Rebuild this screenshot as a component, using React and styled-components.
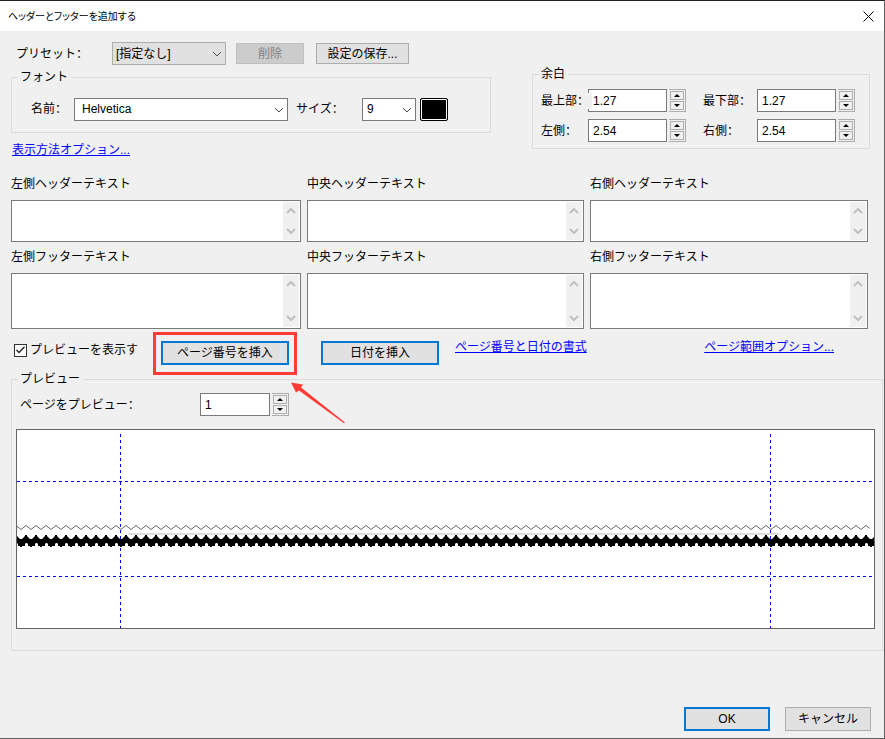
import React, { useState } from 'react'
import styled, { createGlobalStyle, css } from 'styled-components'

const GlobalStyle = createGlobalStyle`
  * {
    box-sizing: border-box;
  }
  body {
    margin: 0;
    background: #f0f0f0;
  }
  body, button, input, select, textarea {
    font-family: 'Liberation Sans', 'Noto Sans CJK SC', sans-serif;
    font-size: 12px;
    line-height: 16px;
    color: #000;
  }
`

const Chevron = ({ up, ...rest }) => (
  <svg width="10" height="6" viewBox="0 0 10 6" fill="none" stroke="currentColor" aria-hidden="true" {...rest}>
    <path d={up ? 'M1 5 L5 1 L9 5' : 'M1 1 L5 5 L9 1'} />
  </svg>
)

const Select = ({ children, wide, grey, grow, ...rest }) => (
  <SelectWrap $grow={grow} $wide={wide}>
    <SelectBox $grey={grey} {...rest}>{children}</SelectBox>
    <SelectArrow />
  </SelectWrap>
)

const Spinner = ({ id, initial, step = 0.01, digits = 2, narrow }) => {
  const [value, setValue] = useState(initial)
  const move = (d) => setValue((Number(value) + d).toFixed(digits))

  return (
    <SpinnerWrap>
      <NumberInput id={id} $narrow={narrow} value={value} onChange={(e) => setValue(e.target.value)} />
      <SpinButtons>
        <SpinButton type="button" aria-label="+" onClick={() => move(step)}>
          <svg width="6" height="3" viewBox="0 0 6 3"><path d="M0 3 L3 0 L6 3 Z" /></svg>
        </SpinButton>
        <SpinButton type="button" aria-label="-" onClick={() => move(-step)}>
          <svg width="6" height="3" viewBox="0 0 6 3"><path d="M0 0 L3 3 L6 0 Z" /></svg>
        </SpinButton>
      </SpinButtons>
    </SpinnerWrap>
  )
}

const TextField = ({ id, label, tall }) => (
  <Field>
    <label htmlFor={id}>{label}</label>
    <AreaFrame $tall={tall}>
      <Area id={id} />
      <ScrollTrack>
        <Chevron up strokeWidth="2" />
        <Chevron strokeWidth="2" />
      </ScrollTrack>
    </AreaFrame>
  </Field>
)

const PagePreview = () => (
  <Canvas>
    <svg width="100%" height="198" aria-hidden="true">
      <defs>
        <pattern id="thin" x="4" y="94" width="10" height="7" patternUnits="userSpaceOnUse">
          <path d="M0 5.5 L5 1.5 L10 5.5" fill="none" stroke="#666" />
        </pattern>
        <pattern id="thick" x="4" y="104" width="10" height="14" patternUnits="userSpaceOnUse">
          <path d="M0 5 H1 L4 2 V1 H6 V2 L9 5 H10 V13 H9 V12 H7 V10 L6 9 H5 L4 10 V12 H1 V13 H0 Z" />
        </pattern>
      </defs>
      <g stroke="#0000ff" strokeDasharray="3 3" shapeRendering="crispEdges">
        <line x1="0" x2="100%" y1="51.5" y2="51.5" />
        <line x1="0" x2="100%" y1="146.5" y2="146.5" />
        <line x1="12.07%" x2="12.07%" y1="4" y2="198" />
        <line x1="87.93%" x2="87.93%" y1="4" y2="198" />
      </g>
      <rect x="13%" y="103" width="76%" height="2" fill="#dcdcdc" />
      <rect y="94" width="99.5%" height="7" fill="url(#thin)" />
      <rect y="104" width="100%" height="14" fill="url(#thick)" />
    </svg>
  </Canvas>
)

const App = () => {
  const [showPreview, setShowPreview] = useState(true)

  return (
    <Dialog>
      <GlobalStyle />
      <TitleBar>
        <Title>ヘッダーとフッターを追加する</Title>
        <CloseButton type="button" aria-label="閉じる">
          <svg width="11" height="11" viewBox="0 0 11 11" stroke="#000" fill="none">
            <path d="M0.500 0.500 L10.500 10.500 M10.500 0.500 L0.500 10.500" />
          </svg>
        </CloseButton>
      </TitleBar>

      <Content>
        <TopArea>
          <div>
            <PresetRow>
              <PresetLabel htmlFor="preset">プリセット：</PresetLabel>
              <Select id="preset" wide={114} grey>
                <option>[指定なし]</option>
              </Select>
              <Button type="button" $width={68} disabled>削除</Button>
              <Button type="button" $width={93}>設定の保存...</Button>
            </PresetRow>
            <Group>
              <legend>フォント</legend>
              <FontRow>
                <label htmlFor="font">名前：</label>
                <Select id="font" grow>
                  <option>Helvetica</option>
                </Select>
                <SizeLabel htmlFor="size">サイズ：</SizeLabel>
                <Select id="size" wide={54}>
                  <option>9</option>
                </Select>
                <Swatch type="button" aria-label="色" />
              </FontRow>
            </Group>
            <DisplayLink href="#">表示方法オプション...</DisplayLink>
          </div>

          <MarginGroup>
            <legend>余白</legend>
            <MarginGrid>
              <MarginLabel htmlFor="top" $over>最上部：</MarginLabel>
              <Spinner id="top" initial="1.27" />
              <MarginLabel htmlFor="bottom">最下部：</MarginLabel>
              <Spinner id="bottom" initial="1.27" />
              <MarginLabel htmlFor="left">左側：</MarginLabel>
              <Spinner id="left" initial="2.54" />
              <MarginLabel htmlFor="right">右側：</MarginLabel>
              <Spinner id="right" initial="2.54" />
            </MarginGrid>
          </MarginGroup>
        </TopArea>

        <TextGrid>
          <TextField id="hl" label="左側ヘッダーテキスト" />
          <TextField id="hc" label="中央ヘッダーテキスト" />
          <TextField id="hr" label="右側ヘッダーテキスト" />
          <TextField id="fl" label="左側フッターテキスト" tall />
          <TextField id="fc" label="中央フッターテキスト" tall />
          <TextField id="fr" label="右側フッターテキスト" tall />
        </TextGrid>

        <Actions>
          <CheckLabel>
            <CheckBox type="checkbox" checked={showPreview} onChange={(e) => setShowPreview(e.target.checked)} />
            {showPreview && (
              <Tick width="9" height="8" viewBox="0 0 9 8" fill="none" stroke="#222" strokeWidth="1.3">
                <path d="M0.500 4 L3 6.500 L8.500 0.800" />
              </Tick>
            )}
            プレビューを表示す
          </CheckLabel>
          <Highlight>
            <Button type="button" $width={128} $primary>ページ番号を挿入</Button>
            <Arrow width="54" height="42" viewBox="0 0 54 42" fill="#ff3b36">
              <path d="M0 0.500 L12 2.500 L10 5.500 L54 40.500 L53 41.300 L8 8.500 L5 10.500 Z" />
            </Arrow>
          </Highlight>
          <Button type="button" $width={118} $primary>日付を挿入</Button>
          <FormatLink href="#">ページ番号と日付の書式</FormatLink>
          <Link href="#">ページ範囲オプション...</Link>
        </Actions>
      </Content>

      <PreviewGroup>
        <legend>プレビュー</legend>
        <PreviewRow>
          <label htmlFor="page">ページをプレビュー：</label>
          <Spinner id="page" initial="1" step={1} digits={0} narrow />
        </PreviewRow>
        <PagePreview />
      </PreviewGroup>

      <Footer>
        <Button type="button" $width={86} $primary>OK</Button>
        <Button type="button" $width={86} $tall>キャンセル</Button>
      </Footer>
    </Dialog>
  )
}

const Dialog = styled.div`
  display: flex;
  flex-direction: column;
  min-height: 100vh;
  background: #f0f0f0;
  border: solid #5f5f5f;
  border-width: 1px 1px 1px 0;
  border-top-color: #221f28;
`

const TitleBar = styled.header`
  display: flex;
  align-items: center;
  justify-content: space-between;
  height: 30px;
  padding: 0 10px 0 8px;
  background: #fff;
`

const Title = styled.h1`
  margin: 0;
  font-size: 10px;
  font-weight: 400;
  font-family: 'Noto Sans CJK JP', sans-serif;
  font-feature-settings: 'palt';
`

const CloseButton = styled.button`
  display: flex;
  padding: 0;
  border: 0;
  background: none;
`

const Content = styled.main`
  padding: 11px 14px 0 11px;
`

const TopArea = styled.div`
  display: grid;
  grid-template-columns: 480fr 338fr;
  column-gap: 41px;
  align-items: start;
`

const PresetRow = styled.div`
  display: flex;
  align-items: center;
  padding-left: 5px;
  margin-bottom: 4px;

  button {
    margin-left: 10px;
  }
  button + button {
    margin-left: 12px;
  }
`

const PresetLabel = styled.label`
  width: 96px;
`

const SelectWrap = styled.div`
  position: relative;
  height: 23px;
  ${({ $grow, $wide }) => ($grow ? 'flex: 1;' : `width: ${$wide}px;`)}
`

const SelectBox = styled.select`
  appearance: none;
  display: block;
  width: 100%;
  height: 100%;
  margin: 0;
  padding: 0 16px 0 ${({ $grey }) => ($grey ? 3 : 4)}px;
  border: 1px solid ${({ $grey }) => ($grey ? '#adadad' : '#7a7a7a')};
  border-radius: 0;
  background: ${({ $grey }) => ($grey ? '#e1e1e1' : '#fff')};
`

const SelectArrow = styled(Chevron)`
  position: absolute;
  right: 4px;
  top: 9px;
  color: #505050;
  pointer-events: none;
`

const Button = styled.button`
  width: ${({ $width }) => $width}px;
  height: 21px;
  padding: 0;
  border: 1px solid #adadad;
  background: #e1e1e1;
  white-space: nowrap;

  &:disabled {
    border-color: #bfbfbf;
    background: #ccc;
    color: #838383;
  }
  ${({ $tall }) => $tall && css`
    height: 24px;
  `}
  ${({ $primary }) => $primary && css`
    height: 24px;
    border: 2px solid #0078d7;
  `}
`

const Group = styled.fieldset`
  min-width: 0;
  margin: 0;
  padding: 12px 42px 11px 19px;
  border: 1px solid #dcdcdc;

  legend {
    margin-left: -13px;
    padding: 0 3px 0 2px;
  }
`

const FontRow = styled.div`
  display: flex;
  align-items: center;
  height: 24px;

  label:first-child {
    width: 43px;
  }
  ${SelectBox}#font {
    padding-left: 7px;
  }
`

const SizeLabel = styled.label`
  width: 66px;
  margin-left: 8px;
`

const Swatch = styled.button`
  width: 28px;
  height: 23px;
  margin-left: 4px;
  padding: 0;
  border: 1px solid #000;
  border-radius: 2px;
  background: #000;
  box-shadow: inset 0 0 0 1px #fff;
`

const Link = styled.a`
  color: #0000ff;
  text-decoration: underline;
`

const DisplayLink = styled(Link)`
  display: inline-block;
  margin: 9px 0 0 1px;
`

const MarginGroup = styled(Group)`
  margin-top: 24px;
  padding: 7px 14px 6px 8px;

  legend {
    margin-left: -2px;
  }
`

const MarginGrid = styled.div`
  display: grid;
  grid-template-columns: 47px 1fr 54px auto;
  row-gap: 7px;
`

const MarginLabel = styled.label`
  align-self: center;
  ${({ $over }) => $over && css`
    z-index: 1;
    margin-right: -4px;
    background: #f0f0f0;
  `}
`

const SpinnerWrap = styled.div`
  display: flex;
  gap: 2px;
`

const NumberInput = styled.input`
  width: ${({ $narrow }) => ($narrow ? 70 : 79)}px;
  height: 23px;
  padding: 0 4px;
  border: 1px solid #7a7a7a;
`

const SpinButtons = styled.div`
  display: flex;
  flex-direction: column;
  gap: 1px;
  width: 17px;
  height: 23px;
  padding: 1px;
  border: 1px solid #adadad;
  border-left: 0;
`

const SpinButton = styled.button`
  display: flex;
  flex: 1;
  align-items: center;
  justify-content: center;
  padding: 0;
  border: 1px solid #adadad;
  background: #f0f0f0;
`

const TextGrid = styled.div`
  display: grid;
  grid-template-columns: 290fr 277fr 278fr;
  gap: 7px 6px;
  margin-top: 18px;
  padding-right: 2px;
`

const Field = styled.div`
  display: flex;
  flex-direction: column;
  gap: 8px;
`

const AreaFrame = styled.div`
  display: flex;
  height: ${({ $tall }) => ($tall ? 56 : 42)}px;
  padding: 1px;
  border: 1px solid #7a7a7a;
  background: #fff;
`

const Area = styled.textarea`
  flex: 1;
  min-width: 0;
  padding: 2px;
  border: 0;
  outline: 0;
  resize: none;
`

const ScrollTrack = styled.div`
  display: flex;
  flex-direction: column;
  align-items: center;
  justify-content: space-between;
  width: 16px;
  padding: 6px 0;
  background: #f0f0f0;
  color: #bfbfbf;
`

const Actions = styled.div`
  display: flex;
  align-items: flex-end;
  height: 26px;
  margin-top: 10px;
  padding-right: 36px;

  > a {
    align-self: flex-start;
  }
  > a:last-child {
    margin-left: auto;
  }
`

const CheckLabel = styled.label`
  position: relative;
  display: flex;
  align-items: center;
  align-self: flex-start;
  gap: 3px;
  width: 150px;
  height: 22px;
  padding-left: 3px;
`

const CheckBox = styled.input`
  appearance: none;
  width: 13px;
  height: 13px;
  margin: 0;
  border: 1px solid #333;
  background: #fff;
`

const Tick = styled.svg`
  position: absolute;
  left: 5px;
  top: 7px;
  pointer-events: none;
`

const Highlight = styled.div`
  position: relative;
  height: 24px;
  margin-right: 32px;

  &::after {
    content: '';
    position: absolute;
    inset: -9px -8px -10px;
    border: 3px solid #ff3b36;
    pointer-events: none;
  }
`

const Arrow = styled.svg`
  position: absolute;
  left: 130px;
  top: 41px;
  z-index: 1;
  pointer-events: none;
`

const FormatLink = styled(Link)`
  margin-left: 16px;
`

const PreviewGroup = styled(Group)`
  margin: 6px 1px 0 11px;
  padding: 6px 7px 21px 4px;

  legend {
    margin-left: 2px;
  }
`

const PreviewRow = styled.div`
  display: flex;
  align-items: center;
  margin-bottom: 13px;
  padding-left: 4px;

  label {
    width: 180px;
  }
`

const Canvas = styled.div`
  height: 200px;
  border: 1px solid #646464;
  background: #fff;

  svg {
    display: block;
  }
`

const Footer = styled.footer`
  display: flex;
  justify-content: flex-end;
  gap: 15px;
  margin-top: auto;
  padding: 24px 13px 7px;
`

export default App
